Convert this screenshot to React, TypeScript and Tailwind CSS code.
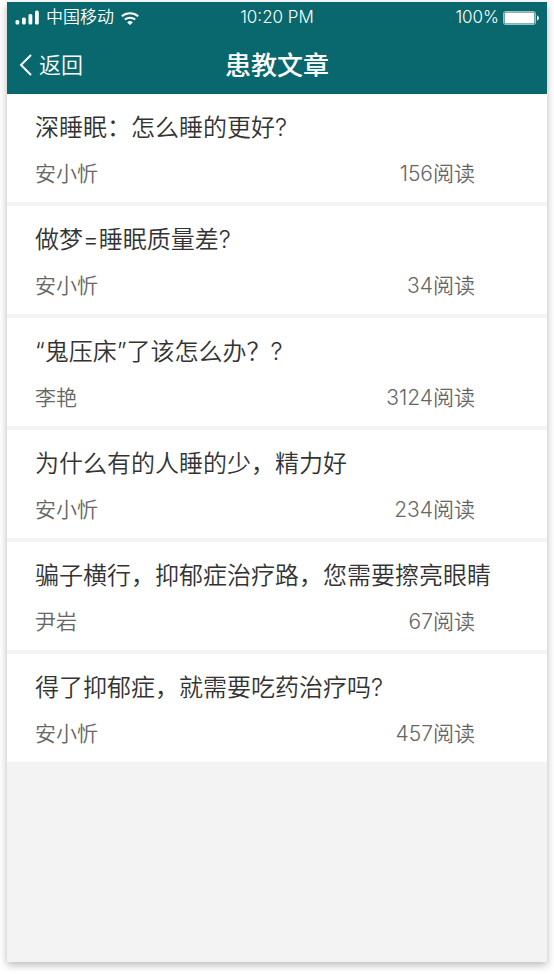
const articles = [
  { id: 1, title: '深睡眠：怎么睡的更好?', author: '安小忻', reads: 156 },
  { id: 2, title: '做梦=睡眠质量差?', author: '安小忻', reads: 34 },
  { id: 3, title: '“鬼压床”了该怎么办？?', author: '李艳', reads: 3124 },
  { id: 4, title: '为什么有的人睡的少，精力好', author: '安小忻', reads: 234 },
  { id: 5, title: '骗子横行，抑郁症治疗路，您需要擦亮眼睛', author: '尹岩', reads: 67 },
  { id: 6, title: '得了抑郁症，就需要吃药治疗吗?', author: '安小忻', reads: 457 },
];

function SignalIcon() {
  return (
    <svg width="24" height="16" viewBox="0 0 24 16" fill="currentColor" aria-hidden="true">
      <rect x="0.5" y="10" width="3.8" height="4.5" rx="1.5" />
      <rect x="7" y="7.5" width="3.8" height="7" rx="1.5" />
      <rect x="13.5" y="4" width="3.8" height="10.5" rx="1.5" />
      <rect x="20" y="0.5" width="3.8" height="14" rx="1.5" />
    </svg>
  );
}

function WifiIcon() {
  return (
    <svg width="18" height="13" viewBox="0 0 18 13" fill="none" stroke="currentColor" strokeWidth="2" aria-hidden="true">
      <path d="M0.8 4.2a12.6 12.6 0 0 1 16.4 0" />
      <path d="M3.8 7.6a8 8 0 0 1 10.4 0" />
      <path d="M9 13 6.2 10.4a4 4 0 0 1 5.6 0z" fill="currentColor" stroke="none" />
    </svg>
  );
}

function BatteryIcon() {
  return (
    <svg width="36" height="14" viewBox="0 0 36 14" fill="currentColor" aria-hidden="true">
      <rect x="0.5" y="0.5" width="32" height="13" rx="2" fill="none" stroke="currentColor" strokeOpacity="0.6" />
      <rect x="1.6" y="1.6" width="29.8" height="10.8" rx="1" />
      <path d="M34 4.5c1.3.3 1.9 1.3 1.9 2.5s-.6 2.2-1.9 2.5z" />
    </svg>
  );
}

function BackIcon() {
  return (
    <svg width="13" height="22" viewBox="0 0 13 22" fill="none" stroke="currentColor" strokeWidth="2" aria-hidden="true">
      <path d="M12 1 2 11l10 10" />
    </svg>
  );
}

export default function App() {
  return (
    <div className="flex min-h-screen flex-col bg-white px-[7px] pt-0.5 pb-3 font-[Inter,'Noto_Sans_CJK_SC',sans-serif]">
      <div className="flex flex-1 flex-col bg-[#f3f3f3] shadow-[0_3px_8px_rgba(0,0,0,0.28)]">
        <header className="bg-[#09676e] text-white">
          <div className="grid h-8 grid-cols-[1fr_auto_1fr] items-center px-2 text-[17px] font-[350]">
            <div className="flex items-center gap-[7px]">
              <SignalIcon />
              <span>中国移动</span>
              <WifiIcon />
            </div>
            <span className="font-light">10:20 PM</span>
            <div className="flex items-center justify-end gap-1">
              <span className="font-light">100%</span>
              <BatteryIcon />
            </div>
          </div>
          <div className="grid h-15 grid-cols-[1fr_auto_1fr] items-center px-3 pt-0.5">
            <button type="button" className="flex items-center gap-[7px] justify-self-start text-[22px] font-[350]">
              <BackIcon />
              返回
            </button>
            <h1 className="text-[26px] font-medium">患教文章</h1>
          </div>
        </header>

        <ul className="flex flex-col gap-1">
          {articles.map((article) => (
            <li key={article.id}>
              <a href={`#article-${article.id}`} className="flex h-27 flex-col gap-2.5 bg-white pt-4 pr-[72px] pl-7">
                <h2 className="text-[24px] leading-9 font-[350] whitespace-nowrap text-[#333]">{article.title}</h2>
                <div className="flex justify-between text-[21px] leading-9 font-[350] text-[#666]">
                  <span>{article.author}</span>
                  <span>{article.reads}阅读</span>
                </div>
              </a>
            </li>
          ))}
        </ul>
      </div>
    </div>
  );
}
